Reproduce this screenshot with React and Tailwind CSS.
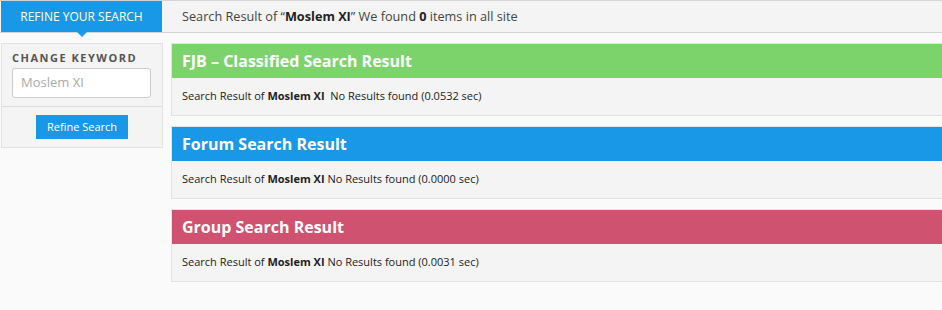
import React from "react";

const results = [
  { title: "FJB – Classified Search Result", color: "bg-[#7dd36b]", time: "0.0532", gap: true },
  { title: "Forum Search Result", color: "bg-[#1a98e8]", time: "0.0000" },
  { title: "Group Search Result", color: "bg-[#cf5270]", time: "0.0031" },
];

function ResultPanel({ title, color, time, gap }) {
  return (
    <div className="border border-[#e3e3e3] bg-[#f4f4f4]">
      <div className={`${color} h-[34px] px-[10px] flex items-center text-[16px] font-bold text-white`}>
        {title}
      </div>
      <div className="h-[37px] px-[10px] flex items-center text-[11px] text-[#222]">
        Search Result of&nbsp;<b className="font-bold">Moslem XI</b>
        {gap ? "\u00a0\u00a0" : "\u00a0"}No Results found ({time} sec)
      </div>
    </div>
  );
}

export default function App() {
  return (
    <div
      className="min-h-[310px] w-[942px] overflow-hidden bg-[#fafafa]"
      style={{ fontFamily: "'Open Sans', 'Liberation Sans', sans-serif" }}
    >
      <div className="flex h-[33px] border-y border-[#d4d4d4] bg-[#f4f4f4]">
        <div className="relative ml-px flex w-[161px] items-center justify-center bg-[#1a98e8] text-[12px] text-white">
          REFINE YOUR SEARCH
          <span className="absolute left-1/2 top-full -ml-[5px] h-0 w-0 border-x-[5px] border-t-[5px] border-x-transparent border-t-[#1a98e8]" />
        </div>
        <div className="flex items-center pl-[20px] text-[12.7px] text-[#444]">
          Search Result of “<b className="font-bold text-[#222]">Moslem XI</b>” We found&nbsp;
          <b className="font-bold text-[#222]">0</b>&nbsp;items in all site
        </div>
      </div>

      <div className="mt-[10px] flex gap-[8px] pl-px">
        <div className="w-[162px] shrink-0 self-start border border-[#e3e3e3] bg-[#f4f4f4]">
          <div className="px-[10px] pt-[6px] pb-[8px] border-b border-[#dcdcdc]">
            <div className="text-[11px] leading-[16px] font-bold tracking-[1.5px] text-[#555]">CHANGE KEYWORD</div>
            <div className="mt-[2px] flex h-[30px] w-[139px] items-center rounded-[3px] border border-[#ccc] bg-white px-[8px] text-[13px] text-[#aaa]">
              Moslem XI
            </div>
          </div>
          <div className="flex justify-center py-[8px]">
            <button className="h-[24px] w-[92px] bg-[#1a98e8] text-[11px] text-white">Refine Search</button>
          </div>
        </div>

        <div className="flex w-[780px] shrink-0 flex-col gap-[10px]">
          {results.map((r) => (
            <ResultPanel key={r.title} {...r} />
          ))}
        </div>
      </div>
    </div>
  );
}
